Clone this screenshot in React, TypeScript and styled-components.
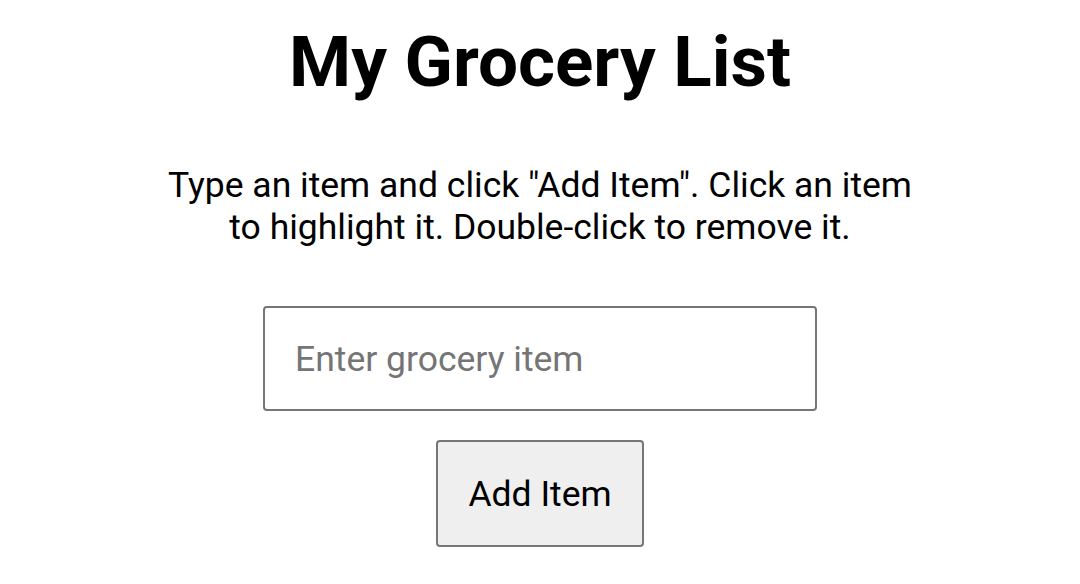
import React from "react";
import styled, { createGlobalStyle } from "styled-components";

const Global = createGlobalStyle`
  html, body { margin: 0; padding: 0; background: #ffffff; }
  body { font-family: Roboto, "Liberation Sans", Arial, sans-serif; color: #000; }
`;

const Page = styled.main`
  display: flex;
  flex-direction: column;
  align-items: center;
  padding-top: 20px;
`;

const Title = styled.h1`
  margin: 0;
  font-size: 71px;
  font-weight: 700;
  line-height: normal;
`;

const Intro = styled.p`
  margin: 61px 0 0;
  max-width: 770px;
  text-align: center;
  font-size: 35.5px;
  line-height: normal;
`;

const Form = styled.div`
  display: flex;
  flex-direction: column;
  align-items: center;
  gap: 29px;
  margin-top: 58px;
`;

const Input = styled.input`
  box-sizing: border-box;
  width: 554px;
  height: 105px;
  padding: 0 30px;
  border: 2px solid #767676;
  border-radius: 4px;
  font-family: Roboto, "Liberation Sans", Arial, sans-serif;
  font-size: 35.5px;
  color: #000;
  outline: none;
  &::placeholder { color: #757575; }
`;

const Button = styled.button`
  box-sizing: border-box;
  height: 107px;
  padding: 0 30px;
  white-space: nowrap;
  border: 2px solid #767676;
  border-radius: 4px;
  background: #efefef;
  font-family: Roboto, "Liberation Sans", Arial, sans-serif;
  font-size: 35.5px;
  color: #000;
  cursor: pointer;
`;

export default function App() {
  return (
    <>
      <Global />
      <Page>
        <Title>My Grocery List</Title>
        <Intro>
          Type an item and click "Add Item". Click an item to highlight it. Double-click to remove it.
        </Intro>
        <Form>
          <Input placeholder="Enter grocery item" />
          <Button>Add Item</Button>
        </Form>
      </Page>
    </>
  );
}
